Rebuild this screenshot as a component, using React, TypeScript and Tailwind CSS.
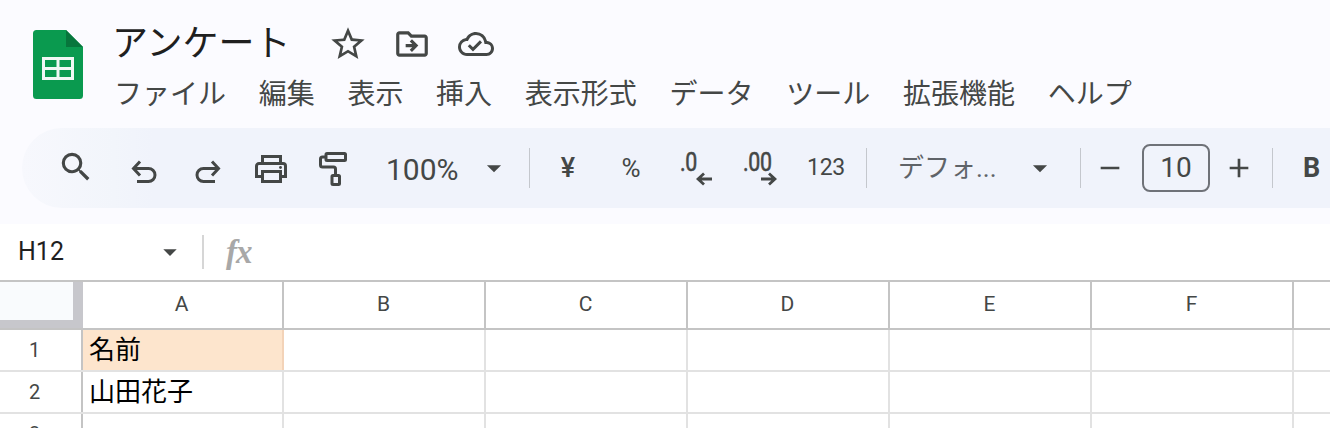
import React from "react";
import { MdStarBorder, MdOutlineDriveFileMove, MdOutlineCloudDone, MdSearch, MdArrowDropDown, MdAdd, MdRemove } from "react-icons/md";

const JP = "font-['Roboto','Noto_Sans_CJK_JP',sans-serif]";
const INK = "#444746";

function SheetsLogo() {
  return (
    <svg width="50" height="69" viewBox="0 0 50 69" className="shrink-0">
      <path d="M3.5 0H33L50 17V65.5a3.5 3.5 0 0 1-3.5 3.5H3.5A3.5 3.5 0 0 1 0 65.5V3.5A3.5 3.5 0 0 1 3.5 0z" fill="#0a9a4f" />
      <path d="M33 0L50 17H33z" fill="#07763c" />
      <path d="M9 27H41V50H9z M12 30V37H23.5V30z M26.5 30V37H38V30z M12 40V47H23.5V40z M26.5 40V47H38V40z" fill="#f1f8f4" fillRule="evenodd" />
    </svg>
  );
}

function Undo({ flip }: { flip?: boolean }) {
  return (
    <svg width="26" height="24" viewBox="0 0 26 24" fill="none" stroke={INK} strokeWidth="3" className={flip ? "-scale-x-100" : ""}>
      <path d="M9 1.5L2.5 8.5L9 15.5" />
      <path d="M3 8.5H17.5a6 6 0 0 1 0 13H6" />
    </svg>
  );
}

function Printer() {
  return (
    <svg width="32" height="28" viewBox="0 0 32 28" fill="none" stroke={INK} strokeWidth="3">
      <path d="M7.5 9V1.5H25.5V9" />
      <path d="M7 21.5H1.5V11a2.5 2.5 0 0 1 2.5-2.5H28a2.5 2.5 0 0 1 2.5 2.5V21.5H25" />
      <rect x="7.5" y="16.5" width="18" height="10" />
      <circle cx="25.5" cy="12.5" r="1.4" fill={INK} stroke="none" />
    </svg>
  );
}

function Roller() {
  return (
    <svg width="28" height="34" viewBox="0 0 28 34" fill="none" stroke={INK} strokeWidth="3">
      <rect x="7" y="1.5" width="19.5" height="7" rx="1" />
      <path d="M7 5H3.5a2 2 0 0 0-2 2V13a2 2 0 0 0 2 2h11a2 2 0 0 1 2 2V23" />
      <rect x="13" y="23.5" width="7.5" height="9" rx="1" />
    </svg>
  );
}

function Sep() {
  return <div className="w-[1px] h-[40px] bg-[#c4c7cd] shrink-0" />;
}

function Decimal({ label, right, ml, w }: { label: string; right?: boolean; ml: string; w: string }) {
  return (
    <div className={`${ml} ${w} h-[44px] shrink-0 flex flex-col items-end mt-[4px]`}>
      <span className="block w-full text-[26px] leading-[28px] tracking-[-0.4px] text-[#444746] whitespace-nowrap scale-x-[0.82] origin-left [-webkit-text-stroke:0.6px_#444746]">{label}</span>
      <svg width="16" height="14" viewBox="0 0 16 14" fill="none" stroke={INK} strokeWidth="2.8" className="-mt-[4px]">
        {right ? <path d="M0 7H14M8 1.5L14 7L8 12.5" /> : <path d="M16 7H2M8 1.5L2 7L8 12.5" />}
      </svg>
    </div>
  );
}

export default function App() {
  const menu = ["ファイル", "編集", "表示", "挿入", "表示形式", "データ", "ツール", "拡張機能", "ヘルプ"];
  const cols = ["B", "C", "D", "E", "F"];
  const rows = [
    { n: "1", v: "名前", fill: true },
    { n: "2", v: "山田花子", fill: false },
    { n: "3", v: "", fill: false },
  ];
  return (
    <div className={`w-[1330px] h-[428px] overflow-hidden bg-white ${JP}`}>
      <div className="h-[224px] bg-[#fbfbff] flex flex-col">
        <div className="h-[128px] flex items-start pl-[33px] pt-[30px] shrink-0">
          <SheetsLogo />
          <div className="ml-[29px] -mt-[11px] flex flex-col">
            <div className="flex items-center h-[50px]">
              <span className="text-[36px] leading-[50px] text-[#1f1f1f] w-[216px] whitespace-nowrap">アンケート</span>
              <MdStarBorder size={40} color={INK} className="-mt-[1px]" />
              <MdOutlineDriveFileMove size={38} color={INK} className="ml-[25px] -mt-[1px]" />
              <MdOutlineCloudDone size={36} color={INK} className="ml-[27px] -mt-[1px]" />
            </div>
            <div className="flex items-center gap-[32.7px] h-[40px] mt-[6px] ml-[2px] text-[28px] text-[#444746] leading-[40px]">
              {menu.map((m) => (
                <span key={m}>{m}</span>
              ))}
            </div>
          </div>
        </div>
        <div className="h-[80px] ml-[22px] rounded-l-[40px] bg-[linear-gradient(90deg,#f7f8fd_0%,#f2f5fb_7%,#f0f3fb_10%)] flex items-center text-[#444746] overflow-hidden">
          <MdSearch size={38} className="ml-[35px] -mt-[2px] shrink-0" />
          <div className="ml-[36px] mt-[8px] shrink-0"><Undo /></div>
          <div className="ml-[38px] mt-[8px] shrink-0"><Undo flip /></div>
          <div className="ml-[34px] mt-[2px] shrink-0"><Printer /></div>
          <div className="ml-[32px] mt-[2px] shrink-0"><Roller /></div>
          <span className="ml-[39px] text-[30px] leading-[40px] w-[80px] shrink-0 mt-[4px]">100%</span>
          <MdArrowDropDown size={34} className="shrink-0 ml-[11px]" />
          <div className="ml-[18px] shrink-0"><Sep /></div>
          <span className="ml-[16px] w-[44px] text-center text-[27px] leading-[36px] font-medium shrink-0">¥</span>
          <span className="ml-[19px] w-[44px] text-center text-[26px] leading-[36px] shrink-0">%</span>
          <Decimal label=".0" ml="ml-[27px]" w="w-[32px]" />
          <Decimal label=".00" right ml="ml-[31px]" w="w-[34px]" />
          <span className="ml-[27px] text-[23px] w-[44px] text-center tracking-[-0.3px] shrink-0">123</span>
          <div className="ml-[18px] shrink-0"><Sep /></div>
          <span className="ml-[31px] w-[105px] text-[26px] text-[#5f6368] shrink-0 whitespace-nowrap">デフォ...</span>
          <MdArrowDropDown size={34} className="shrink-0 ml-[20px]" />
          <div className="ml-[23px] shrink-0"><Sep /></div>
          <MdRemove size={32} className="ml-[13px] shrink-0" />
          <div className="ml-[16px] w-[68px] h-[48px] rounded-[8px] border-2 border-[#6f7278] flex items-center justify-center text-[28px] shrink-0">10</div>
          <MdAdd size={32} className="ml-[13px] shrink-0" />
          <div className="ml-[17px] shrink-0"><Sep /></div>
          <span className="ml-[30px] text-[27px] font-bold shrink-0">B</span>
        </div>
      </div>
      <div className="h-[56px] flex items-center bg-white">
        <span className="ml-[18px] w-[136px] text-[25px] text-[#1f1f1f] -mt-[1px]">H12</span>
        <MdArrowDropDown size={32} color={INK} className="shrink-0" />
        <div className="ml-[16px] w-[2px] h-[34px] bg-[#d6d6d6]" />
        <span className="ml-[22px] text-[33px] leading-[40px] italic font-bold text-[#a8a8a8] font-['Liberation_Serif',serif] tracking-[-1px]">fx</span>
      </div>
      <div className="flex flex-col">
        <div className="flex h-[50px] border-t-2 border-b-2 border-[#c4c4c4] bg-white">
          <div className="w-[83px] shrink-0 border-r-[10px] border-b-[8px] border-[#c7c7cc] bg-[#f9fbfd]" />
          <div className="w-[201px] shrink-0 flex items-center justify-center pr-[2px] text-[21px] text-[#444746] border-r-2 border-[#c4c4c4]">A</div>
          {cols.map((c) => (
            <div key={c} className="w-[202px] shrink-0 flex items-center justify-center pr-[1px] text-[21px] text-[#444746] border-r-2 border-[#c4c4c4]">{c}</div>
          ))}
        </div>
        {rows.map((r) => (
          <div key={r.n} className="flex h-[42px] border-b-2 border-[#e2e2e2]">
            <div className="w-[83px] shrink-0 flex items-center justify-center text-[20px] text-[#444746] border-r-2 border-[#c4c4c4] pr-[12px] bg-white">{r.n}</div>
            <div className={`w-[201px] shrink-0 flex items-center pl-[6px] text-[26px] text-black border-r-2 ${r.fill ? "bg-[#fde5cd] border-[#f3d3b8]" : "border-[#e2e2e2]"}`}>{r.v}</div>
            {cols.map((c) => (
              <div key={c} className="w-[202px] shrink-0 border-r-2 border-[#e2e2e2]" />
            ))}
          </div>
        ))}
      </div>
    </div>
  );
}
